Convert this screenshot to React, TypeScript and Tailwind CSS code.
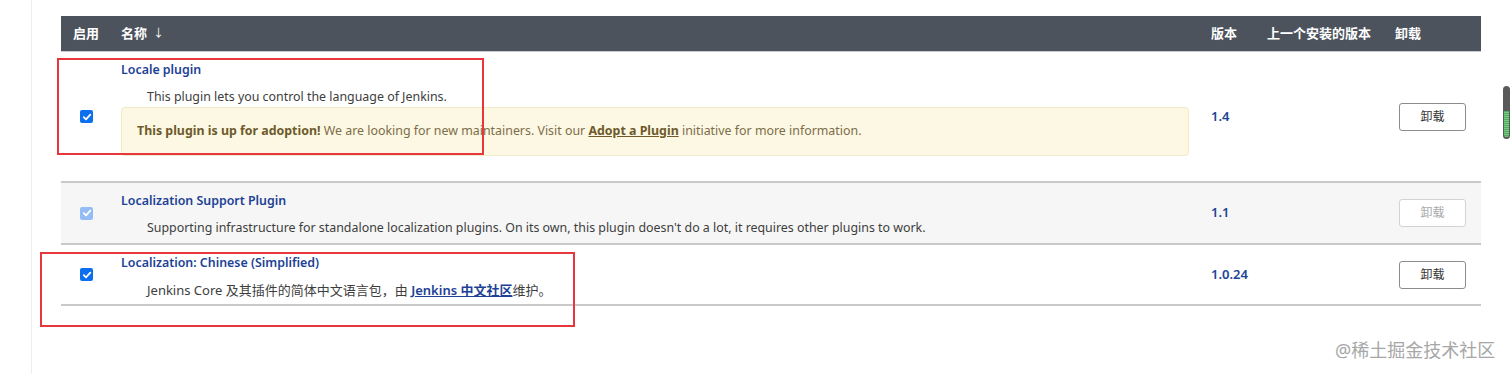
const cols = "grid grid-cols-[48px_1090px_56px_128px_98px]";

const CheckBox = ({ disabled = false }: { disabled?: boolean }) => {
    return (
        <span
            className={
                disabled
                    ? "flex h-[13px] w-[13px] items-center justify-center rounded-[2px] bg-[#94bdf5]"
                    : "flex h-[13px] w-[13px] items-center justify-center rounded-[2px] bg-[#0b6ff0]"
            }
        >
            <svg width="10" height="10" viewBox="0 0 10 10" fill="none">
                <path
                    d="M1.8 5.2 L4 7.3 L8.3 2.6"
                    stroke="white"
                    strokeWidth="1.8"
                    strokeLinecap="round"
                    strokeLinejoin="round"
                />
            </svg>
        </span>
    );
};

const UninstallButton = ({ disabled = false }: { disabled?: boolean }) => {
    return (
        <button
            type="button"
            className={
                disabled
                    ? "ml-4 h-[28px] w-[67px] rounded-[3px] border border-[#d3d3d3] bg-white text-[12px] text-[#a9a9a9]"
                    : "ml-4 h-[28px] w-[67px] rounded-[3px] border border-[#8c8c8c] bg-white text-[12px] text-[#333]"
            }
        >
            卸载
        </button>
    );
};

const PluginRow = ({
    version,
    disabled = false,
    gray = false,
    children,
}: {
    version: string;
    disabled?: boolean;
    gray?: boolean;
    children: React.ReactNode;
}) => {
    return (
        <div
            className={
                gray
                    ? `${cols} border-b-2 border-[#c9c9c9] bg-[#f6f6f6]`
                    : `${cols} border-b-2 border-[#c9c9c9] bg-white`
            }
        >
            <div className="flex items-center pl-[19px]">
                <CheckBox disabled={disabled} />
            </div>
            <div className="px-3 pt-[9px]">{children}</div>
            <div className="flex items-center pl-3 text-[13px] font-semibold text-[#1c4597]">
                {version}
            </div>
            <div />
            <div className="flex items-center">
                <UninstallButton disabled={disabled} />
            </div>
        </div>
    );
};

export default function App() {
    return (
        <div className="relative h-[374px] w-[1512px] overflow-hidden bg-white font-['Noto_Sans','Noto_Sans_CJK_SC',sans-serif] text-[12.4px] text-[#333]">
            <div className="flex h-full">
                <div className="w-8 shrink-0 border-r border-[#ededed]" />
                <div className="pl-[29px] pt-4">
                    <div className="w-[1420px]">
                        {/* header */}
                        <div
                            className={`${cols} h-9 border-b border-[#c5ccd6] bg-[#4c535c] text-[13px] font-bold text-white`}
                        >
                            <div className="flex items-center pl-[12px]">启用</div>
                            <div className="flex items-center pl-3">
                                名称 <span className="ml-1.5 text-[11px] font-normal">↓</span>
                            </div>
                            <div className="flex items-center pl-3">版本</div>
                            <div className="flex items-center pl-3">上一个安装的版本</div>
                            <div className="flex items-center pl-3">卸载</div>
                        </div>

                        <PluginRow version="1.4">
                            <div className="pb-[25px]">
                                <div className="leading-[18px] font-semibold text-[#1d4295]">
                                    Locale plugin
                                </div>
                                <div className="mt-[9px] pl-[26px] leading-[18px] text-[#3d3d3d]">
                                    This plugin lets you control the language of Jenkins.
                                </div>
                                <div className="mt-px mr-[-2px] flex h-[49px] items-center rounded-[4px] border border-[#f2ebc8] bg-[#fcf8e3] pl-[15px] text-[#7d6d4a]">
                                    <span>
                                        <b className="font-bold text-[#6e5a2b]">
                                            This plugin is up for adoption!
                                        </b>{" "}
                                        We are looking for new maintainers. Visit our{" "}
                                        <a className="font-bold text-[#6e5a2b] underline">
                                            Adopt a Plugin
                                        </a>{" "}
                                        initiative for more information.
                                    </span>
                                </div>
                            </div>
                        </PluginRow>

                        <PluginRow version="1.1" disabled gray>
                            <div className="pb-[6px]">
                                <div className="leading-[18px] font-semibold text-[#1d4295]">
                                    Localization Support Plugin
                                </div>
                                <div className="mt-[9px] pl-[26px] leading-[18px] text-[#3d3d3d]">
                                    Supporting infrastructure for standalone localization
                                    plugins. On its own, this plugin doesn't do a lot, it
                                    requires other plugins to work.
                                </div>
                            </div>
                        </PluginRow>

                        <PluginRow version="1.0.24">
                            <div className="pb-[5px]">
                                <div className="leading-[18px] font-semibold text-[#1d4295]">
                                    Localization: Chinese (Simplified)
                                </div>
                                <div className="mt-[9px] pl-[26px] text-[13px] leading-[18px] text-[#3d3d3d]">
                                    Jenkins Core 及其插件的简体中文语言包，由{" "}
                                    <a className="font-semibold text-[#1d4295] underline">
                                        Jenkins 中文社区
                                    </a>
                                    维护。
                                </div>
                            </div>
                        </PluginRow>
                    </div>
                </div>
            </div>

            {/* annotation boxes */}
            <div className="pointer-events-none absolute left-[57px] top-[58px] h-[97px] w-[427px] border-2 border-[#e8373c]" />
            <div className="pointer-events-none absolute left-[40px] top-[252px] h-[75px] w-[535px] border-2 border-[#e8373c]" />

            {/* scrollbar thumb */}
            <div className="absolute left-[1503px] top-[86px] flex h-[53px] w-[7px] flex-col overflow-hidden rounded-full bg-[#5a5a5a]">
                <div className="h-[25px]" />
                <div className="mx-[1px] mb-[2px] flex-1 rounded-b-full bg-[repeating-linear-gradient(to_bottom,#4fae5b_0px,#4fae5b_1px,#7cc884_1px,#7cc884_2px)]" />
            </div>

            {/* watermark */}
            <div className="absolute left-[1335px] top-[339px] text-[18px] leading-[22px] text-[#a6a6a6]">
                @稀土掘金技术社区
            </div>
        </div>
    );
}
